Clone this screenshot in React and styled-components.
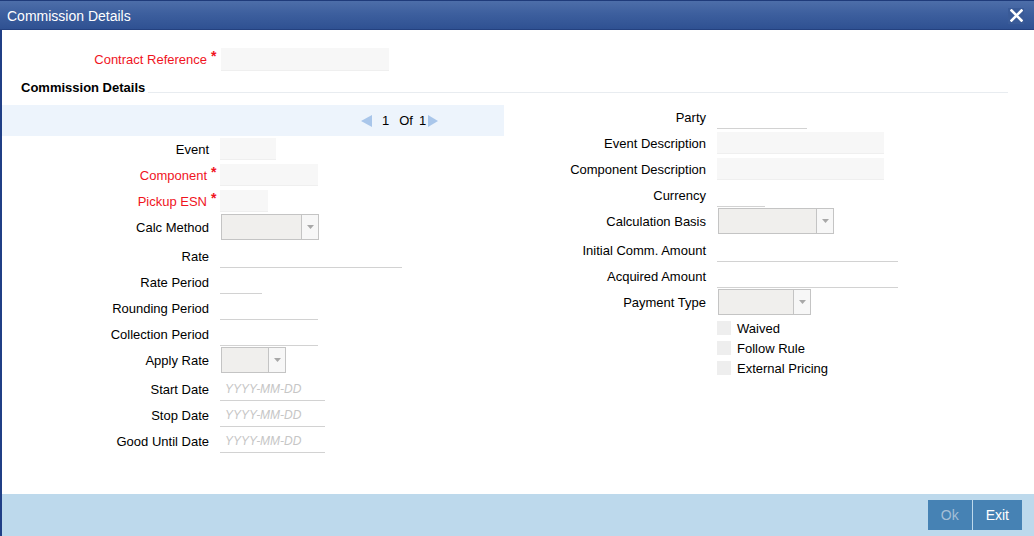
import React from 'react'
import styled, { createGlobalStyle } from 'styled-components'

const GlobalStyle = createGlobalStyle`
  html, body {
    margin: 0;
    padding: 0;
    background: #ffffff;
  }
  body {
    font-family: "Liberation Sans", Arial, sans-serif;
    font-size: 13px;
    color: #000;
  }
`

const leftRows = [
  { label: 'Event', kind: 'box', w: 56 },
  { label: 'Component', kind: 'box', w: 98, req: true },
  { label: 'Pickup ESN', kind: 'box', w: 48, req: true },
  { label: 'Calc Method', kind: 'select', w: 98, after: 3 },
  { label: 'Rate', kind: 'line', w: 182 },
  { label: 'Rate Period', kind: 'line', w: 42 },
  { label: 'Rounding Period', kind: 'line', w: 98 },
  { label: 'Collection Period', kind: 'line', w: 98 },
  { label: 'Apply Rate', kind: 'select', w: 65, after: 3 },
  { label: 'Start Date', kind: 'date', w: 105 },
  { label: 'Stop Date', kind: 'date', w: 105 },
  { label: 'Good Until Date', kind: 'date', w: 105 },
]

const rightRows = [
  { label: 'Party', kind: 'line', w: 90 },
  { label: 'Event Description', kind: 'box', w: 167 },
  { label: 'Component Description', kind: 'box', w: 167 },
  { label: 'Currency', kind: 'line', w: 48 },
  { label: 'Calculation Basis', kind: 'select', w: 116, after: 3 },
  { label: 'Initial Comm. Amount', kind: 'line', w: 181 },
  { label: 'Acquired Amount', kind: 'line', w: 181 },
  { label: 'Payment Type', kind: 'select', w: 93 },
]

const checks = ['Waived', 'Follow Rule', 'External Pricing']

function Control({ kind, w }) {
  if (kind === 'select') {
    return (
      <Select $w={w}>
        <SelectArrow>
          <svg width="7" height="4" viewBox="0 0 7 4">
            <path d="M0 0 L7 0 L3.5 4 Z" fill="#a8a8a8" />
          </svg>
        </SelectArrow>
      </Select>
    )
  }
  if (kind === 'date') return <LineInput $w={w}><Placeholder>YYYY-MM-DD</Placeholder></LineInput>
  if (kind === 'box') return <BoxInput $w={w} />
  return <LineInput $w={w} />
}

function FieldRow({ row, labelWidth, markWidth }) {
  return (
    <Row $label={labelWidth} $mark={markWidth} $after={row.after}>
      <Label $req={row.req}>{row.label}</Label>
      <Mark>{row.req ? '*' : ''}</Mark>
      <Control kind={row.kind} w={row.w} />
    </Row>
  )
}

function App() {
  return (
    <>
      <GlobalStyle />
      <Window>
        <TitleBar>
          <Title>Commission Details</Title>
          <Close>
            <svg width="13" height="13" viewBox="0 0 13 13">
              <path d="M1.5 1.5 L11.5 11.5 M11.5 1.5 L1.5 11.5" stroke="#fff" strokeWidth="2.6" strokeLinecap="square" />
            </svg>
          </Close>
        </TitleBar>
        <Body>
          <ContractRow>
            <Label $req>Contract Reference</Label>
            <Mark>*</Mark>
            <BoxInput $w={168} $h={23} />
          </ContractRow>
          <SectionHeader>
            <SectionTitle>Commission Details</SectionTitle>
            <SectionRule />
          </SectionHeader>
          <Columns>
            <LeftColumn>
              <Pager>
                <svg width="11" height="12" viewBox="0 0 11 12">
                  <path d="M11 0 L11 12 L0 6 Z" fill="#a9c6ea" />
                </svg>
                <PagerText>1</PagerText>
                <PagerText>Of</PagerText>
                <PagerText $tight>1</PagerText>
                <svg width="10" height="12" viewBox="0 0 10 12">
                  <path d="M0 0 L0 12 L10 6 Z" fill="#a9c6ea" />
                </svg>
              </Pager>
              {leftRows.map((r) => (
                <FieldRow key={r.label} row={r} labelWidth={207} markWidth={11} />
              ))}
            </LeftColumn>
            <RightColumn>
              {rightRows.map((r) => (
                <FieldRow key={r.label} row={r} labelWidth={202} markWidth={11} />
              ))}
              <Checks>
                {checks.map((c) => (
                  <CheckRow key={c}>
                    <CheckBox />
                    <span>{c}</span>
                  </CheckRow>
                ))}
              </Checks>
            </RightColumn>
          </Columns>
        </Body>
        <Footer>
          <Button $disabled>Ok</Button>
          <Button>Exit</Button>
        </Footer>
      </Window>
    </>
  )
}

const Window = styled.div`
  width: 1034px;
  height: 536px;
  display: flex;
  flex-direction: column;
  overflow: hidden;
`

const TitleBar = styled.div`
  height: 30px;
  box-sizing: border-box;
  flex: none;
  display: flex;
  align-items: center;
  justify-content: space-between;
  padding: 0 10px 0 7px;
  background: linear-gradient(to bottom, #4d6ea9 0%, #3d5f9e 45%, #2f5192 100%);
  border-top: 1px solid #1f3b7a;
  border-bottom: 1px solid #24417f;
`

const Title = styled.div`
  color: #ffffff;
  font-size: 14px;
  padding-top: 1px;
`

const Close = styled.div`
  width: 16px;
  height: 16px;
  display: flex;
  align-items: center;
  justify-content: center;
  background: #3a5b98;
  margin-top: 1px;
`

const Body = styled.div`
  flex: 1;
  border-left: 2px solid #203f86;
  background: #ffffff;
  display: flex;
  flex-direction: column;
`

const ContractRow = styled.div`
  display: grid;
  grid-template-columns: 207px 12px auto;
  align-items: center;
  height: 24px;
  margin-top: 17px;
`

const Label = styled.div`
  text-align: right;
  white-space: nowrap;
  color: ${(p) => (p.$req ? '#f0141e' : '#000')};
  padding-right: ${(p) => (p.$req ? '2px' : '0')};
`

const Mark = styled.div`
  color: #f0141e;
  font-size: 14px;
  font-weight: bold;
  padding-left: 2px;
  line-height: 13px;
  align-self: center;
  margin-top: -6px;
`

const SectionHeader = styled.div`
  display: flex;
  align-items: flex-end;
  height: 20px;
  margin-top: 7px;
  padding-left: 19px;
  padding-right: 26px;
`

const SectionTitle = styled.div`
  font-weight: bold;
  font-size: 13px;
  line-height: 16px;
  padding-bottom: 2px;
  padding-right: 3px;
`

const SectionRule = styled.div`
  flex: 1;
  height: 1px;
  background: #e8ecf0;
  margin-bottom: 5px;
`

const Columns = styled.div`
  display: flex;
  margin-top: 6px;
`

const LeftColumn = styled.div`
  width: 502px;
`

const RightColumn = styled.div`
  flex: 1;
`

const Pager = styled.div`
  height: 31px;
  background: #edf4fc;
  display: flex;
  align-items: center;
  padding-left: 359px;
  margin-top: 1px;
`

const PagerText = styled.span`
  margin-left: ${(p) => (p.$tight ? '6px' : '10px')};
  margin-right: ${(p) => (p.$tight ? '2px' : '0')};
  color: #000;
`

const Row = styled.div`
  display: grid;
  grid-template-columns: ${(p) => p.$label}px ${(p) => p.$mark}px auto;
  align-items: center;
  height: 26px;
  margin-bottom: ${(p) => p.$after || 0}px;
`

const BoxInput = styled.div`
  width: ${(p) => p.$w}px;
  height: ${(p) => p.$h || 22}px;
  background: #f7f7f7;
  border-bottom: 1px solid #efefef;
  box-sizing: border-box;
`

const LineInput = styled.div`
  width: ${(p) => p.$w}px;
  height: 22px;
  border-bottom: 1px solid #d2d2d2;
  box-sizing: border-box;
  display: flex;
  align-items: center;
  padding-left: 5px;
  margin-top: 1px;
`

const Placeholder = styled.span`
  font-style: italic;
  color: #c6c6c6;
  font-size: 12px;
`

const Select = styled.div`
  width: ${(p) => p.$w}px;
  height: 26px;
  box-sizing: border-box;
  margin-left: 1px;
  background: #f0efed;
  border: 1px solid #c4c4c4;
  display: flex;
  justify-content: flex-end;
`

const SelectArrow = styled.div`
  width: 16px;
  height: 100%;
  background: #f7f7f7;
  border-left: 1px solid #c4c4c4;
  display: flex;
  align-items: center;
  justify-content: center;
`

const Checks = styled.div`
  padding-left: 213px;
  padding-top: 3px;
  display: flex;
  flex-direction: column;
`

const CheckRow = styled.div`
  display: flex;
  align-items: center;
  gap: 6px;
  height: 20px;
`

const CheckBox = styled.div`
  width: 14px;
  height: 14px;
  background: #eeeeee;
`

const Footer = styled.div`
  height: 42px;
  box-sizing: border-box;
  flex: none;
  background: #bdd9ec;
  border-left: 2px solid #203f86;
  display: flex;
  justify-content: flex-end;
  align-items: flex-start;
  padding: 6px 12px 0 0;
  gap: 1px;
`

const Button = styled.div`
  height: 30px;
  padding: 0 13px;
  min-width: 16px;
  display: flex;
  align-items: center;
  justify-content: center;
  background: #4682b4;
  color: ${(p) => (p.$disabled ? '#a5bfd7' : '#ffffff')};
  font-size: 14px;
`

export default App
